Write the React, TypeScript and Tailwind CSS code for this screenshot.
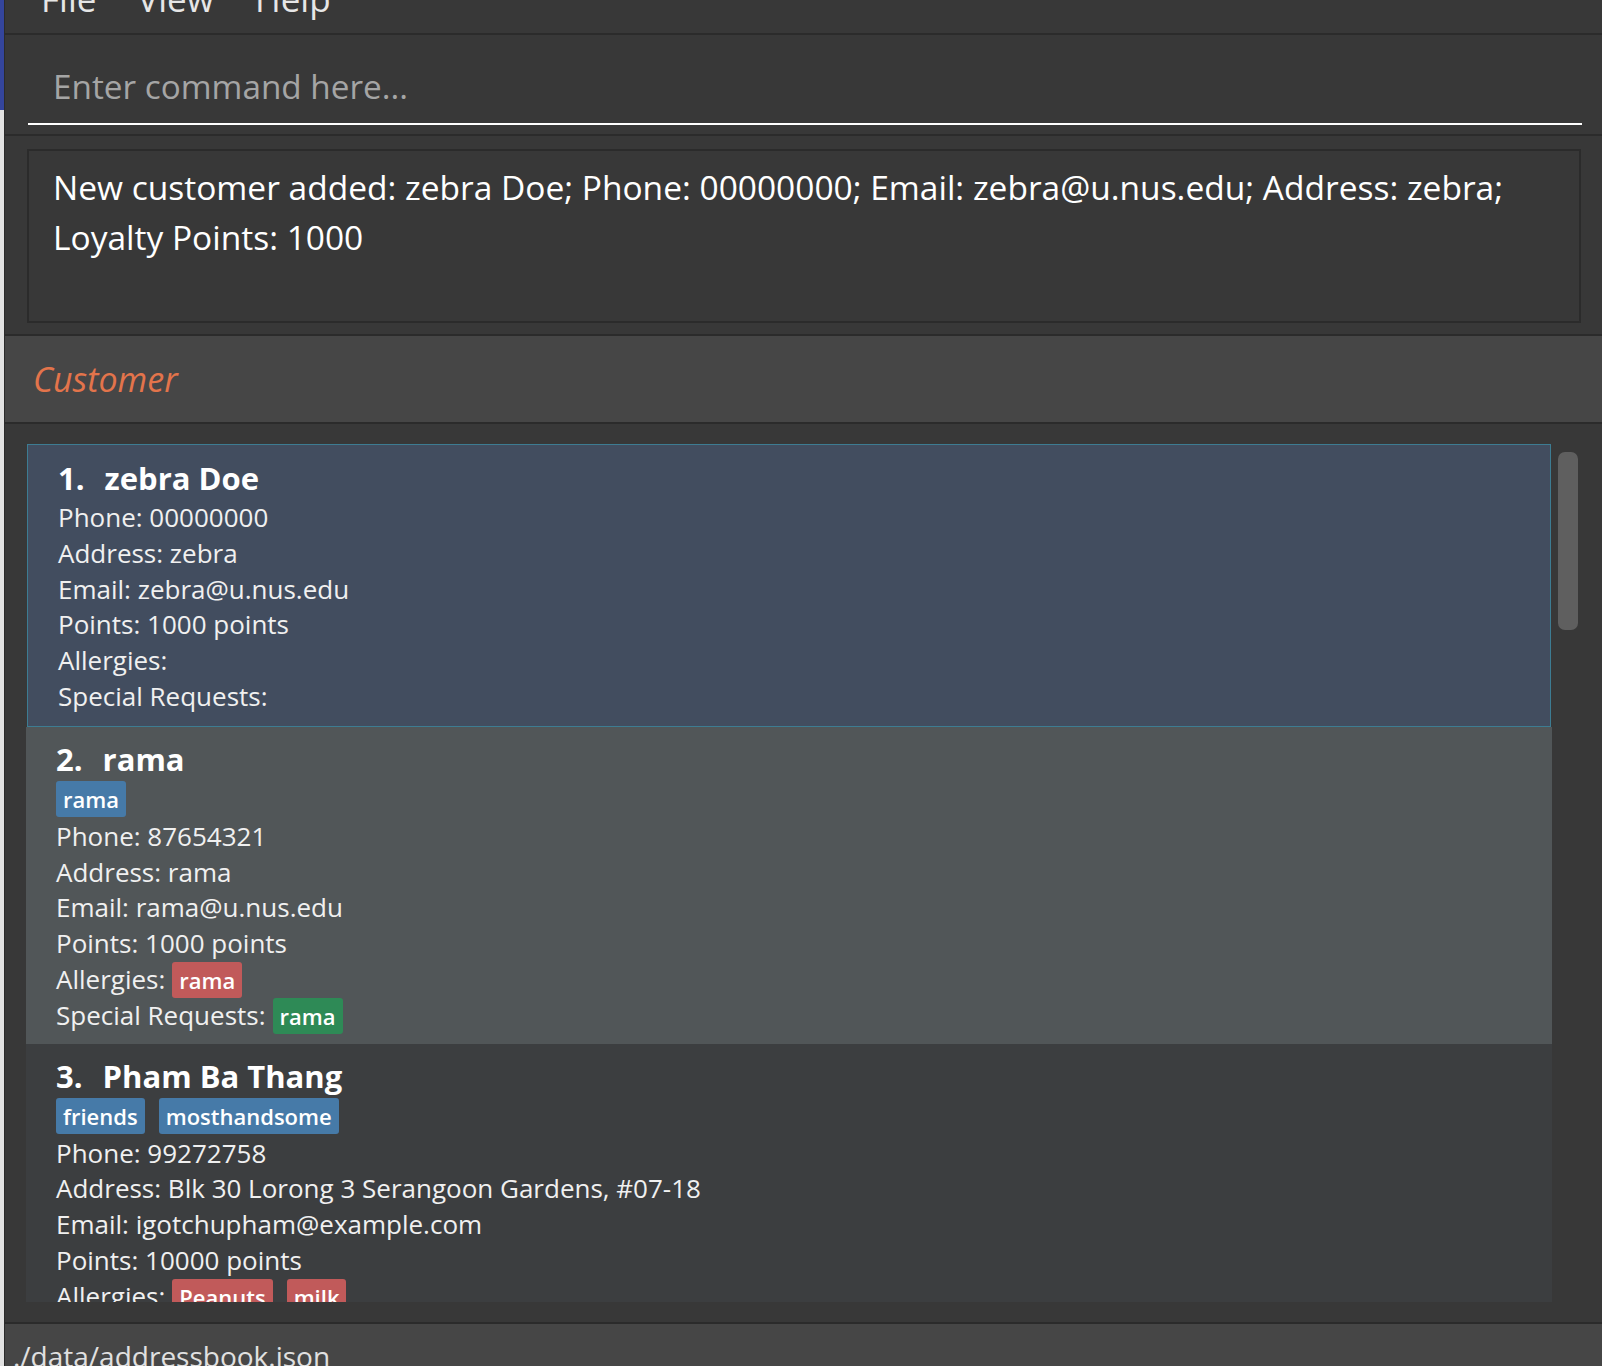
type TagColor = 'blue' | 'red' | 'green';

interface Customer {
  name: string;
  tags: string[];
  phone: string;
  address: string;
  email: string;
  points: string;
  allergies: string[];
  requests: string[];
}

const customers: Customer[] = [
  {
    name: 'zebra Doe',
    tags: [],
    phone: '00000000',
    address: 'zebra',
    email: 'zebra@u.nus.edu',
    points: '1000',
    allergies: [],
    requests: [],
  },
  {
    name: 'rama',
    tags: ['rama'],
    phone: '87654321',
    address: 'rama',
    email: 'rama@u.nus.edu',
    points: '1000',
    allergies: ['rama'],
    requests: ['rama'],
  },
  {
    name: 'Pham Ba Thang',
    tags: ['friends', 'mosthandsome'],
    phone: '99272758',
    address: 'Blk 30 Lorong 3 Serangoon Gardens, #07-18',
    email: 'igotchupham@example.com',
    points: '10000',
    allergies: ['Peanuts', 'milk'],
    requests: ['window seat'],
  },
];

const tagBg: Record<TagColor, string> = {
  blue: 'bg-[#467aa8]',
  red: 'bg-[#c15a5a]',
  green: 'bg-[#2e8a56]',
};

function Tag({ label, color }: { label: string; color: TagColor }) {
  return (
    <span
      className={`flex h-[36px] items-center rounded-[3px] px-[7px] text-[22px] font-semibold leading-none text-white ${tagBg[color]}`}
    >
      {label}
    </span>
  );
}

function CustomerCard({ c, index, selected }: { c: Customer; index: number; selected: boolean }) {
  // selected row gets the teal outline, the others alternate shades
  const bg = index === 1 ? 'bg-[#515658]' : 'bg-[#3c3e40]';
  const shell = selected
    ? 'mx-px border border-[#3d7c92] bg-[#424d5f] pt-[12px] pb-[11px]'
    : `${bg} pt-[11px] pb-[10px]`;

  return (
    <div className={`shrink-0 pl-[30px] ${shell}`}>
      <div className="flex text-[31px] font-bold leading-[43px] text-white">
        <span>{index + 1}.</span>
        <span className="ml-[20px]">{c.name}</span>
      </div>
      {c.tags.length > 0 && (
        <div className="flex h-[38px] gap-[14px]">
          {c.tags.map((t) => (
            <Tag key={t} label={t} color="blue" />
          ))}
        </div>
      )}
      <div className="text-[26px] leading-[35.8px] text-[#f0f0f0]">
        <div>Phone: {c.phone}</div>
        <div>Address: {c.address}</div>
        <div>Email: {c.email}</div>
        <div>Points: {c.points} points</div>
        <div className="flex h-[35.8px] items-center gap-[14px]">
          <span className="mr-[-7px]">Allergies:</span>
          {c.allergies.map((a) => (
            <Tag key={a} label={a} color="red" />
          ))}
        </div>
        <div className="flex h-[35.8px] items-center gap-[14px]">
          <span className="mr-[-7px]">Special Requests:</span>
          {c.requests.map((r) => (
            <Tag key={r} label={r} color="green" />
          ))}
        </div>
      </div>
    </div>
  );
}

export default function App() {
  return (
    <div className="flex h-[1366px] w-[1602px] overflow-hidden bg-[#dcdcdc] font-['Open_Sans',sans-serif]">
      {/* sliver of whatever is behind the window */}
      <div className="flex w-[4px] flex-col">
        <div className="h-[110px] bg-[#34459c]" />
        <div className="flex-1 bg-[#e2e2e2]" />
      </div>

      <div className="flex min-w-0 flex-1 flex-col border-l border-[#2b2b2b] bg-[#383838]">
        {/* menu bar, scrolled off the top */}
        <div className="h-[33px] overflow-hidden">
          <div className="-mt-[25px] flex gap-[41px] pl-[36px] text-[35px] leading-[normal] text-[#e6e6e6]">
            <span>File</span>
            <span>View</span>
            <span>Help</span>
          </div>
        </div>
        <div className="h-[2px] bg-[#2b2b2b]" />

        {/* command box */}
        <div className="h-[99px] pl-[23px] pr-[20px]">
          <div className="border-b-2 border-white pb-[14px] pl-[25px] pt-[28px] text-[33.3px] leading-[normal] text-[#a5a5a5]">
            Enter command here...
          </div>
        </div>
        <div className="h-[2px] bg-[#2b2b2b]" />

        {/* result display */}
        <div className="h-[198px] pl-[22px] pr-[21px] pt-[13px]">
          <div className="h-[174px] border-2 border-[#2b2b2b] pl-[24px] pt-[11px] text-[33.5px] leading-[50px] text-white">
            New customer added: zebra Doe; Phone: 00000000; Email: zebra@u.nus.edu; Address: zebra;
            <br />
            Loyalty Points: 1000
          </div>
        </div>
        <div className="h-[2px] bg-[#2b2b2b]" />

        {/* list header */}
        <div className="flex h-[86px] items-center bg-[#464646] pl-[28px] text-[34px] italic leading-[normal] text-[#e3744b]">
          Customer
        </div>
        <div className="h-[2px] bg-[#2b2b2b]" />

        {/* customer list */}
        <div className="flex h-[898px] py-[20px] pl-[21px] pr-[24px]">
          <div className="flex min-w-0 flex-1 flex-col overflow-hidden">
            {customers.map((c, i) => (
              <CustomerCard key={c.name} c={c} index={i} selected={i === 0} />
            ))}
          </div>
          <div className="ml-[6px] w-[20px]">
            <div className="mt-[8px] h-[178px] rounded-[7px] bg-[#5f5f5f]" />
          </div>
        </div>
        <div className="h-[2px] bg-[#2b2b2b]" />

        {/* status bar */}
        <div className="h-[42px] overflow-hidden bg-[#464646] pl-[8px] pt-[13px] text-[28px] leading-[normal] text-[#e0e0e0]">
          ./data/addressbook.json
        </div>
      </div>
    </div>
  );
}
